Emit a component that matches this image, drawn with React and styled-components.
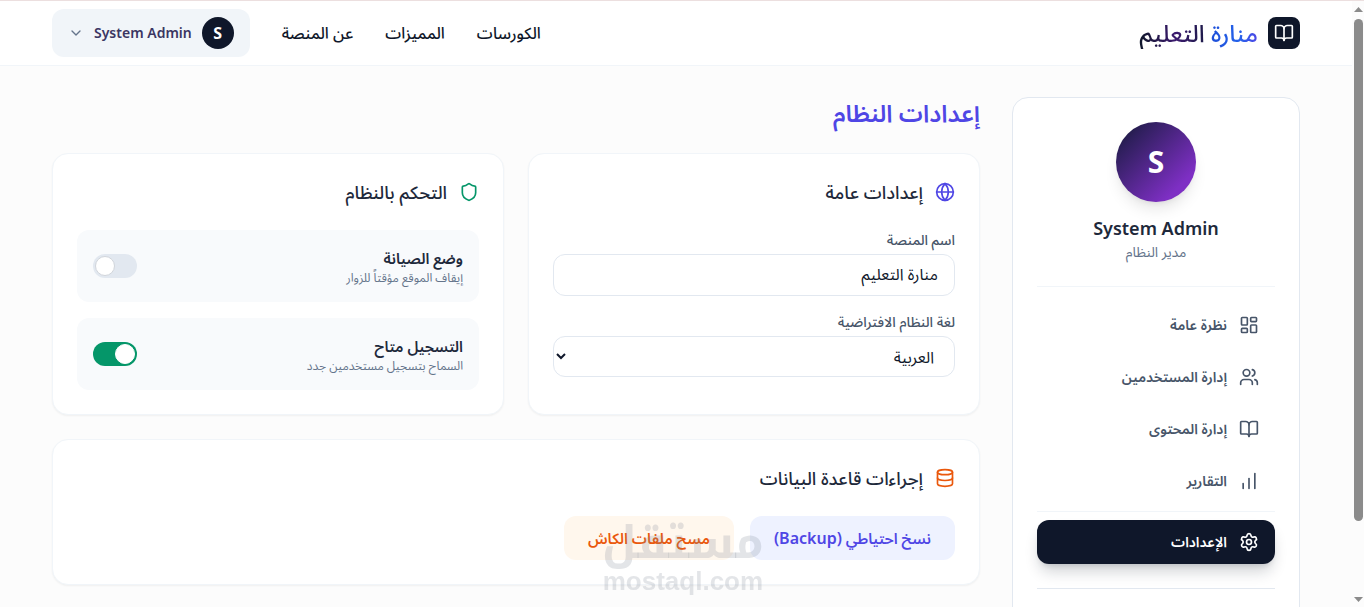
import { useState } from "react";
import styled, { createGlobalStyle } from "styled-components";
import {
  BookOpen,
  ChartNoAxesColumnIncreasing,
  ChevronDown,
  Database,
  Globe,
  LayoutDashboard,
  Settings,
  Shield,
  Users,
} from "lucide-react";

const GlobalStyle = createGlobalStyle`
  *, *::before, *::after {
    box-sizing: border-box;
  }
  html {
    scrollbar-width: none;
  }
  body {
    margin: 0;
    background-color: #fcfcfc;
    color: #0f172a;
    font-family: "Noto Sans", "Noto Sans Arabic", sans-serif;
    font-size: 16px;
    line-height: 24px;
  }
  h1, h2, h3, p {
    margin: 0;
  }
  button, input, select {
    font: inherit;
    color: inherit;
  }
`;

const Page = styled.div`
  direction: rtl;
  padding-right: 12px;
  border-top: 1px solid #ecdfdf;
`;
const Container = styled.div`
  max-width: 1280px;
  margin: 0 auto;
  padding: 0 16px;
`;
const Header = styled.header`
  background-color: #fff;
  border-bottom: 1px solid #f1f5f9;
`;
const HeaderRow = styled(Container)`
  height: 64px;
  display: flex;
  align-items: center;
  justify-content: space-between;
`;
const Brand = styled.a`
  display: flex;
  align-items: center;
  gap: 10px;
  text-decoration: none;
`;
const BrandIcon = styled.span`
  display: flex;
  align-items: center;
  justify-content: center;
  width: 32px;
  height: 32px;
  border-radius: 8px;
  background-color: #0f172a;
  color: #fff;
`;
const BrandName = styled.span`
  font-size: 24px;
  line-height: 32px;
  font-weight: 500;
`;
const BrandWord = styled.span`
  background-image: linear-gradient(to left, ${(prop) => prop.$colors});
  background-clip: text;
  color: transparent;
`;
const HeaderEnd = styled.div`
  display: flex;
  align-items: center;
  gap: 32px;
`;
const TopNav = styled.nav`
  display: flex;
  gap: 32px;
`;
const TopLink = styled.a`
  color: #0f172a;
  font-weight: 500;
  text-decoration: none;
`;
const ProfileButton = styled.button`
  display: flex;
  align-items: center;
  gap: 10px;
  padding: 8px 16px;
  border: none;
  border-radius: 12px;
  background-color: #f1f5f9;
  color: #3b3663;
  font-size: 14px;
  font-weight: 600;
  line-height: 20px;
`;
const Avatar = styled.span`
  display: flex;
  align-items: center;
  justify-content: center;
  flex: none;
  width: 32px;
  height: 32px;
  border-radius: 50%;
  background-color: #0f172a;
  color: #fff;
  font-size: 16px;
  font-weight: 700;
`;

const Layout = styled(Container)`
  display: flex;
  gap: 32px;
  padding-top: 31px;
`;
const Sidebar = styled.aside`
  flex: none;
  width: 288px;
  min-height: 560px;
  padding: 24px;
  background-color: #fff;
  border: 1px solid #e2e8f0;
  border-radius: 16px;
`;
const Profile = styled.div`
  display: flex;
  flex-direction: column;
  align-items: center;
  padding-bottom: 24px;
  margin-bottom: 16px;
  border-bottom: 1px solid #f1f5f9;
`;
const LargeAvatar = styled(Avatar)`
  width: 80px;
  height: 80px;
  margin-bottom: 12px;
  background-image: linear-gradient(to bottom right, #0f172a, #2e1f5c 20%, #7e2fc4 80%, #7e2fc4);
  font-size: 30px;
  box-shadow: 0 10px 15px -3px #0000001a, 0 4px 6px -4px #0000001a;
`;
const ProfileName = styled.h3`
  color: #1e293b;
  font-size: 18px;
  line-height: 28px;
  font-weight: 600;
`;
const ProfileRole = styled.p`
  color: #64748b;
  font-size: 14px;
  line-height: 20px;
`;
const Menu = styled.nav`
  display: flex;
  flex-direction: column;
  gap: 8px;
`;
const MenuLink = styled.a`
  display: flex;
  align-items: center;
  gap: 12px;
  height: 44px;
  padding: 0 16px;
  border-radius: 12px;
  font-size: 14px;
  line-height: 20px;
  font-weight: 600;
  text-decoration: none;
  color: ${(prop) => (prop.$active ? "#fff" : "#475569")};
  background-color: ${(prop) => (prop.$active ? "#0f172a" : "transparent")};
  box-shadow: ${(prop) =>
    prop.$active ? "0 10px 15px -3px #0f172a33, 0 4px 6px -4px #0f172a33" : "none"};
`;
const MenuFooter = styled.div`
  margin-top: 8px;
  padding: 8px 0 24px;
  border-top: 1px solid #f1f5f9;
  border-bottom: 1px solid #e2e8f0;
`;

const Main = styled.main`
  flex: 1;
  min-width: 0;
  display: flex;
  flex-direction: column;
  gap: 24px;
`;
const Title = styled.h1`
  color: #4f46e5;
  font-size: 24px;
  line-height: 32px;
  font-weight: 600;
`;
const CardGrid = styled.div`
  display: grid;
  grid-template-columns: 1fr 1fr;
  gap: 24px;
`;
const Card = styled.section`
  display: flex;
  flex-direction: column;
  gap: 24px;
  padding: 24px;
  background-color: #fff;
  border: 1px solid #f1f5f9;
  border-radius: 16px;
  box-shadow: 0 1px 2px #0000000d;
`;
const CardTitle = styled.h2`
  display: flex;
  align-items: center;
  gap: 12px;
  color: #1e293b;
  font-size: 18px;
  line-height: 28px;
  font-weight: 500;

  svg {
    color: ${(prop) => prop.color};
  }
`;
const Stack = styled.div`
  display: flex;
  flex-direction: column;
  gap: 16px;
`;
const Field = styled.div`
  display: flex;
  flex-direction: column;
  gap: 4px;
`;
const Label = styled.label`
  color: #475569;
  font-size: 14px;
  line-height: 20px;
  font-weight: 500;
`;
const Input = styled.input`
  width: 100%;
  height: 42px;
  padding: 8px 16px;
  border: 1px solid #e2e8f0;
  border-radius: 12px;
  outline: none;
`;
const Select = styled.select`
  width: 100%;
  height: 41px;
  padding: 8px 16px;
  border: 1px solid #e2e8f0;
  border-radius: 12px;
  background-color: #fff;
  outline: none;
`;
const ToggleRow = styled.div`
  display: flex;
  align-items: center;
  justify-content: space-between;
  padding: 16px;
  border-radius: 12px;
  background-color: #f8fafc;
`;
const ToggleTitle = styled.label`
  display: block;
  color: #1e293b;
  font-size: 15px;
  line-height: 24px;
  font-weight: 600;
`;
const ToggleHint = styled.p`
  color: #64748b;
  font-size: 12px;
  line-height: 16px;
`;
const Switch = styled.input.attrs({ type: "checkbox", role: "switch" })`
  appearance: none;
  direction: ltr;
  display: flex;
  justify-content: flex-start;
  flex: none;
  width: 44px;
  height: 24px;
  margin: 0;
  padding: 2px;
  border-radius: 12px;
  background-color: #e2e8f0;

  &::before {
    content: "";
    width: 20px;
    height: 20px;
    border: 1px solid #d1d5db;
    border-radius: 50%;
    background-color: #fff;
  }
  &:checked {
    justify-content: flex-end;
    background-color: #059669;
  }
  &:checked::before {
    border-color: #fff;
  }
`;
const Actions = styled.div`
  display: flex;
  flex-wrap: wrap;
  gap: 16px;
`;
const ActionButton = styled.button`
  height: 44px;
  padding: 0 24px;
  border: none;
  border-radius: 12px;
  font-size: 15px;
  font-weight: 600;
  color: ${(prop) => prop.color};
  background-color: ${(prop) => prop.$bg};
`;
const Latin = styled.span`
  font-size: 16px;
`;

const Watermark = styled.div`
  position: fixed;
  left: 602px;
  bottom: 12px;
  display: flex;
  flex-direction: column;
  align-items: center;
  color: #80889438;
  font-weight: 700;
  pointer-events: none;
`;
const WatermarkWord = styled.span`
  font-family: "Noto Kufi Arabic", sans-serif;
  font-size: 45px;
  line-height: 48px;
`;
const WatermarkSite = styled.span`
  font-family: "Liberation Sans", sans-serif;
  font-size: 26px;
  line-height: 28px;
`;

const ScrollRail = styled.div`
  position: fixed;
  top: 1px;
  right: 0;
  bottom: 0;
  width: 12px;
  padding: 6px 1px 5px 2px;
  display: flex;
  flex-direction: column;
  align-items: center;
  gap: 7px;
  background-color: #fcfcfc;
  color: #8b8b8b;
`;
const ScrollTrack = styled.div`
  flex: 1;
  width: 100%;
`;
const ScrollThumb = styled.div`
  width: 100%;
  height: 88%;
  border-radius: 5px;
  background-color: #8b8b8b;
`;

const menuItems = [
  { label: "نظرة عامة", icon: LayoutDashboard },
  { label: "إدارة المستخدمين", icon: Users },
  { label: "إدارة المحتوى", icon: BookOpen },
  { label: "التقارير", icon: ChartNoAxesColumnIncreasing },
];

function ToggleSetting({ id, title, hint, initial }) {
  const [checked, setChecked] = useState(initial);

  return (
    <ToggleRow>
      <div>
        <ToggleTitle htmlFor={id}>{title}</ToggleTitle>
        <ToggleHint>{hint}</ToggleHint>
      </div>
      <Switch id={id} checked={checked} onChange={() => setChecked(!checked)} />
    </ToggleRow>
  );
}

function ScrollBar() {
  return (
    <ScrollRail aria-hidden="true">
      <svg width="9" height="5" viewBox="0 0 9 5" fill="currentColor">
        <path d="M4.5 0 9 5H0z" />
      </svg>
      <ScrollTrack>
        <ScrollThumb />
      </ScrollTrack>
      <svg width="9" height="5" viewBox="0 0 9 5" fill="currentColor">
        <path d="M0 0h9L4.5 5z" />
      </svg>
    </ScrollRail>
  );
}

export default function App() {
  const [name, setName] = useState("منارة التعليم");

  return (
    <>
      <GlobalStyle />
      <Page lang="ar">
        <Header>
          <HeaderRow>
            <Brand href="#">
              <BrandIcon>
                <BookOpen size={20} />
              </BrandIcon>
              <BrandName>
                <BrandWord $colors="#4f46e5, #2563eb 40%, #1d4ed8">منارة</BrandWord>{" "}
                <BrandWord $colors="#1e1b4b, #3b1a6e 45%, #0f172a">التعليم</BrandWord>
              </BrandName>
            </Brand>
            <HeaderEnd>
              <TopNav>
                <TopLink href="#">الكورسات</TopLink>
                <TopLink href="#">المميزات</TopLink>
                <TopLink href="#">عن المنصة</TopLink>
              </TopNav>
              <ProfileButton>
                <Avatar>S</Avatar>
                System Admin
                <ChevronDown size={16} color="#64748b" />
              </ProfileButton>
            </HeaderEnd>
          </HeaderRow>
        </Header>

        <Layout>
          <Sidebar>
            <Profile>
              <LargeAvatar>S</LargeAvatar>
              <ProfileName>System Admin</ProfileName>
              <ProfileRole>مدير النظام</ProfileRole>
            </Profile>
            <Menu>
              {menuItems.map(({ label, icon: Icon }) => (
                <MenuLink href="#" key={label}>
                  <Icon size={20} />
                  {label}
                </MenuLink>
              ))}
            </Menu>
            <MenuFooter>
              <MenuLink href="#" $active>
                <Settings size={20} />
                الإعدادات
              </MenuLink>
            </MenuFooter>
          </Sidebar>

          <Main>
            <Title>إعدادات النظام</Title>
            <CardGrid>
              <Card>
                <CardTitle color="#4f46e5">
                  <Globe size={20} />
                  إعدادات عامة
                </CardTitle>
                <Stack>
                  <Field>
                    <Label htmlFor="platform-name">اسم المنصة</Label>
                    <Input
                      id="platform-name"
                      value={name}
                      onChange={(e) => setName(e.target.value)}
                    />
                  </Field>
                  <Field>
                    <Label htmlFor="language">لغة النظام الافتراضية</Label>
                    <Select id="language">
                      <option>العربية</option>
                    </Select>
                  </Field>
                </Stack>
              </Card>
              <Card>
                <CardTitle color="#059669">
                  <Shield size={20} />
                  التحكم بالنظام
                </CardTitle>
                <Stack>
                  <ToggleSetting
                    id="maintenance"
                    title="وضع الصيانة"
                    hint="إيقاف الموقع مؤقتاً للزوار"
                    initial={false}
                  />
                  <ToggleSetting
                    id="registration"
                    title="التسجيل متاح"
                    hint="السماح بتسجيل مستخدمين جدد"
                    initial={true}
                  />
                </Stack>
              </Card>
            </CardGrid>
            <Card>
              <CardTitle color="#ea580c">
                <Database size={20} />
                إجراءات قاعدة البيانات
              </CardTitle>
              <Actions>
                <ActionButton color="#4f46e5" $bg="#eef2ff">
                  نسخ احتياطي <Latin>(Backup)</Latin>
                </ActionButton>
                <ActionButton color="#ea580c" $bg="#fff7ed">
                  مسح ملفات الكاش
                </ActionButton>
              </Actions>
            </Card>
          </Main>
        </Layout>
      </Page>
      <Watermark>
        <WatermarkWord lang="ar">مستقل</WatermarkWord>
        <WatermarkSite>mostaql.com</WatermarkSite>
      </Watermark>
      <ScrollBar />
    </>
  );
}
